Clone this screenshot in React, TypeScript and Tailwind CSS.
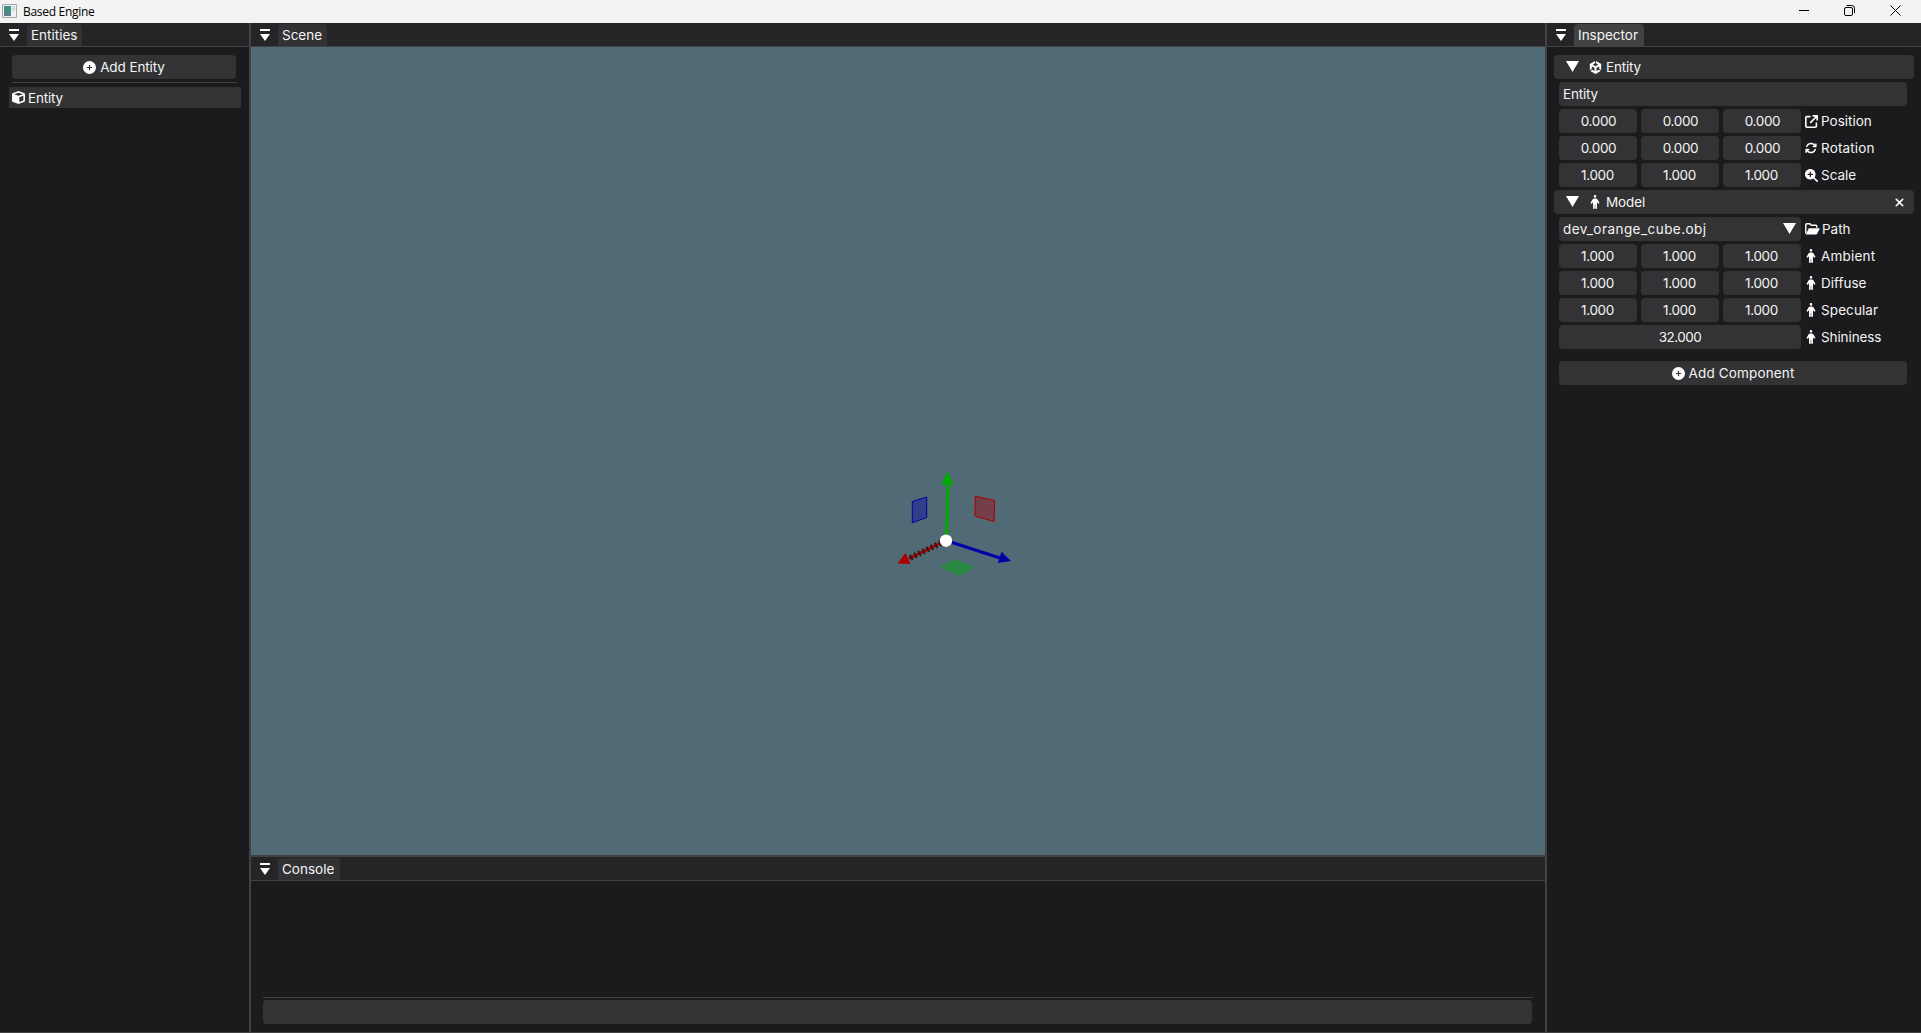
import type { ReactNode } from "react";
import {
  FaCirclePlus,
  FaCube,
  FaMagnifyingGlassPlus,
  FaArrowUpRightFromSquare,
  FaArrowsRotate,
  FaPerson,
  FaUnity,
  FaXmark,
} from "react-icons/fa6";

function Tab({ label, width, active = false }: { label: string; width: string; active?: boolean }) {
  return (
    <div className="flex h-6 shrink-0 border-b border-[#424245] bg-[#252527] pl-[9px] pt-px">
      <svg className="mt-[5px] h-3 w-[10px] shrink-0" viewBox="0 0 10 12" fill="#fff">
        <path d="M0 0h10v2H0zM0 5h10L5 12z" />
      </svg>
      <div className={`ml-2 flex h-[22px] items-center rounded-t-[4px] pl-1 pt-0.5 ${width} ${active ? "bg-[#424244]" : "bg-[#323234]"}`}>
        {label}
      </div>
    </div>
  );
}

function Field({ children, className = "" }: { children?: ReactNode; className?: string }) {
  return <div className={`flex h-6 shrink-0 items-center rounded-[4px] bg-[#333335] ${className}`}>{children}</div>;
}

function Text({ children, className = "" }: { children: ReactNode; className?: string }) {
  return <span className={`pt-[2px] ${className}`}>{children}</span>;
}

function Caret() {
  return (
    <svg className="-mt-px h-[11px] w-[13px] shrink-0" viewBox="0 0 13 11" fill="#fff">
      <path d="M0 0h13L6.5 11z" />
    </svg>
  );
}

function FolderIcon() {
  return (
    <svg className="h-3 w-[15px] shrink-0" viewBox="0 0 15 12">
      <path d="M.8 10.5V1.8q0-1 1-1h3l1.5 1.5h4.5q1 0 1 1v1.4" fill="none" stroke="#fff" strokeWidth="1.4" />
      <path d="M3.8 5.2h10.4q.8 0 .4.8l-2.5 4.8q-.4.7-1.2.7H.8z" fill="#fff" />
    </svg>
  );
}

function PropertyLabel({ icon, text, className = "" }: { icon: ReactNode; text: string; className?: string }) {
  return (
    <div className="ml-1 flex items-center">
      <span className="flex w-4 shrink-0 items-center text-white">{icon}</span>
      <Text className={className}>{text}</Text>
    </div>
  );
}

function VectorRow({ value, icon, label, className = "" }: { value: string; icon: ReactNode; label: string; className?: string }) {
  const nudge = value.startsWith("1") ? "pr-px" : "pl-px";
  return (
    <div className="flex h-6">
      <div className="flex gap-1">
        {[0, 1, 2].map((i) => (
          <Field key={i} className={`w-[78px] justify-center tracking-[-0.35px] ${nudge}`}>
            <Text>{value}</Text>
          </Field>
        ))}
      </div>
      <PropertyLabel icon={icon} text={label} className={className} />
    </div>
  );
}

const person = <FaPerson className="-ml-px size-[14px]" />;

function Gizmo() {
  return (
    <svg className="absolute left-[629px] top-[413px] h-[130px] w-[150px]" viewBox="0 0 150 130">
      <path d="M32.3 41.5 46.7 37v20.5L32.3 62.7z" fill="#0000aa" fillOpacity=".4" stroke="#0000aa" />
      <path d="M95.3 36.2 114.7 40.5 114 61.5 95 56z" fill="#aa0000" fillOpacity=".4" stroke="#aa0000" />
      <path d="M59.5 107.5 75 99 94.5 107 80.5 116z" fill="#2b8744" />
      <path d="M66 80.5 29 98.5" stroke="#aa0000" strokeWidth="3" />
      <path d="M61 83 29 98.5" stroke="#301512" strokeWidth="6" strokeDasharray="1.8 2.8" />
      <path d="M17.5 103.5 25.5 93 30.5 104z" fill="#aa0000" />
      <path d="M66.5 80.5 68 23" stroke="#00aa00" strokeWidth="3.2" />
      <path d="M67.5 11.5 73.7 24.5H61.3z" fill="#00aa00" />
      <path d="M66 80.5 120 98" stroke="#0000aa" strokeWidth="3" />
      <path d="M131 101 117.8 103 121.5 91.7z" fill="#0000aa" />
      <circle cx="66" cy="80.7" r="6.2" fill="#fff" />
    </svg>
  );
}

export default function App() {
  return (
    <div className="flex h-[1033px] w-[1921px] flex-col overflow-hidden bg-[#1b1b1d] font-['Inter',sans-serif] text-[13.5px] leading-none text-[#f4f4f4]">
      <header className="flex h-[23px] shrink-0 items-center bg-[#f3f3f3] text-black">
        <svg className="-mt-px ml-0.5 h-[14px] w-[15px]" viewBox="0 0 15 14">
          <path d="M.5.5h14v13H.5z" fill="#eef2f2" stroke="#a4a9ad" />
          <path d="M2 2h7v10H2z" fill="#3f8f83" />
          <path d="M2 8h7v4H2z" fill="#5d7f92" />
          <path d="M10 2h3v5h-3z" fill="#d2dada" />
        </svg>
        <span className="ml-1.5 font-['Open_Sans',sans-serif] text-[12px] tracking-[-0.3px]">Based Engine</span>
        <div className="-mt-0.5 ml-auto mr-5 flex items-center gap-[35px]">
          <svg className="h-[11px] w-2.5" viewBox="0 0 10 11" stroke="#000">
            <path d="M0 5.5h10" />
          </svg>
          <svg className="h-[11px] w-[11px]" viewBox="0 0 11 11" fill="none" stroke="#000">
            <rect x=".5" y="2.5" width="8" height="8" rx="1.5" />
            <path d="M2.5.5h5.3q2.7 0 2.7 2.7v5" />
          </svg>
          <svg className="h-[11px] w-[11px]" viewBox="0 0 11 11" stroke="#000">
            <path d="m.5.5 10 10m0-10-10 10" />
          </svg>
        </div>
      </header>

      <div className="flex min-h-0 flex-1 border-b border-[#424245]">
        <aside className="flex w-[249px] shrink-0 flex-col">
          <Tab label="Entities" width="w-[55px]" />
          <div className="flex flex-col pt-2">
            <Field className="ml-3 w-56 justify-center">
              <FaCirclePlus className="mr-1 size-[13px] text-white" />
              <Text className="tracking-[-0.1px]">Add Entity</Text>
            </Field>
            <div className="ml-3 mt-[3px] h-px w-[225px] bg-[#424245]" />
            <div className="ml-[9px] mt-1 flex h-[21px] w-[232px] items-center bg-[#333335] pl-[3px]">
              <FaCube className="mr-[3px] size-[13px] text-white" />
              <Text className="tracking-[-0.2px]">Entity</Text>
            </div>
          </div>
        </aside>
        <div className="w-0.5 shrink-0 bg-[#424245]" />
        <main className="flex w-[1294px] shrink-0 flex-col">
          <Tab label="Scene" width="w-[49px]" />
          <section className="relative h-[808px] shrink-0 bg-[#506a76]">
            <Gizmo />
          </section>
          <div className="h-0.5 shrink-0 bg-[#424245]" />
          <Tab label="Console" width="w-[62px]" />
          <section className="flex flex-1 flex-col justify-end pb-2">
            <div className="ml-3 h-px w-[1270px] bg-[#424245]" />
            <Field className="ml-3 mt-0.5 w-[1269px]" />
          </section>
        </main>
        <div className="w-0.5 shrink-0 bg-[#424245]" />
        <aside className="flex w-[374px] shrink-0 flex-col">
          <Tab label="Inspector" width="w-[70px]" active />
          <div className="flex flex-col gap-[3px] pl-3 pt-2">
            <Field className="-ml-[5px] w-[360px] pl-3">
              <Caret />
              <FaUnity className="ml-[10px] mr-1 size-[13px] text-white" />
              <Text className="tracking-[-0.2px]">Entity</Text>
            </Field>
            <Field className="w-[348px] pl-1">
              <Text className="tracking-[-0.2px]">Entity</Text>
            </Field>
            <VectorRow value="0.000" icon={<FaArrowUpRightFromSquare className="size-[13px]" />} label="Position" />
            <VectorRow value="0.000" icon={<FaArrowsRotate className="size-3" />} label="Rotation" className="tracking-[0.15px]" />
            <VectorRow value="1.000" icon={<FaMagnifyingGlassPlus className="size-[13px]" />} label="Scale" />
            <Field className="-ml-[5px] w-[360px] pl-3">
              <Caret />
              <FaPerson className="ml-[9px] mr-1 size-[14px] text-white" />
              <Text className="tracking-[-0.1px]">Model</Text>
              <FaXmark className="ml-auto mr-2 size-[13px] text-white" />
            </Field>
            <div className="flex">
              <Field className="w-[242px] justify-between pl-1 pr-[5px]">
                <Text className="tracking-[0.45px]">dev_orange_cube.obj</Text>
                <Caret />
              </Field>
              <PropertyLabel icon={<FolderIcon />} text="Path" className="ml-px" />
            </div>
            <VectorRow value="1.000" icon={person} label="Ambient" className="tracking-[0.2px]" />
            <VectorRow value="1.000" icon={person} label="Diffuse" />
            <VectorRow value="1.000" icon={person} label="Specular" className="tracking-[0.1px]" />
            <div className="flex">
              <Field className="w-[242px] justify-center tracking-[-0.5px]">
                <Text>32.000</Text>
              </Field>
              <PropertyLabel icon={person} text="Shininess" className="tracking-[-0.1px]" />
            </div>
            <Field className="mt-[9px] w-[348px] justify-center">
              <FaCirclePlus className="mr-1 size-[13px] text-white" />
              <Text className="tracking-[0.15px]">Add Component</Text>
            </Field>
          </div>
        </aside>
      </div>
    </div>
  );
}
